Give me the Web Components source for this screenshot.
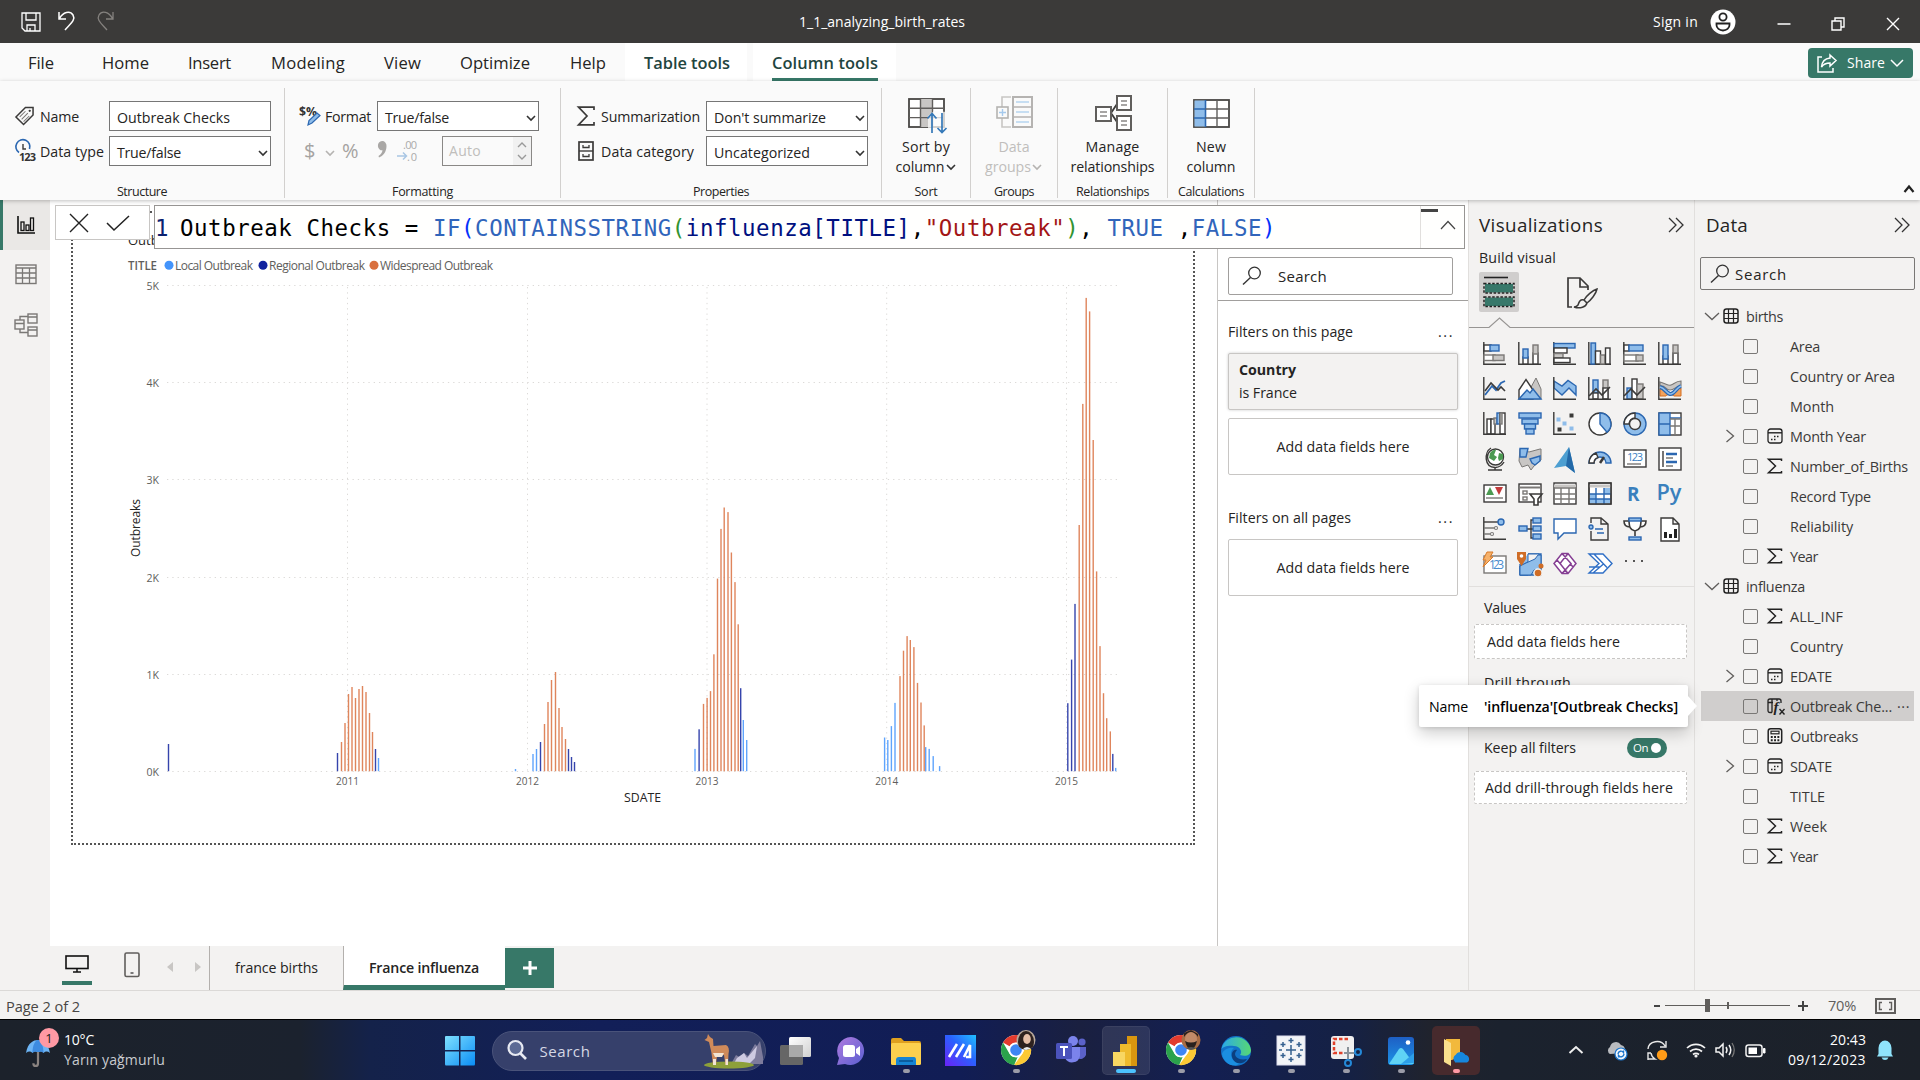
<!DOCTYPE html>
<html lang="en">
<head>
<meta charset="utf-8">
<title>1_1_analyzing_birth_rates</title>
<style>
html,body{margin:0;padding:0;width:1920px;height:1080px;overflow:hidden;background:#f3f2f1;font-family:"Open Sans","Noto Sans",sans-serif;font-size:14.2px;color:#252423}
</style>
</head>
<body>
<bi-app></bi-app>
<script>
const define=(name,css,html,setup)=>customElements.define(name,class extends HTMLElement{
  constructor(){super();this.attachShadow({mode:'open'});}
  connectedCallback(){
    if(this.ready)return;this.ready=true;
    const body=typeof html==='function'?html(this):html;
    this.shadowRoot.innerHTML=`<style>*{box-sizing:border-box}svg{display:block}:host{box-sizing:border-box}${css}</style>${body}`;
    if(setup)setup(this);
  }
});

/* text fitted to a given width by letter spacing */
define('fit-text',`:host{display:inline-block;white-space:nowrap;flex:none}span{display:inline-block;white-space:pre}`,
  `<span><slot></slot></span>`,el=>{
    const w=parseFloat(el.getAttribute('w'));
    el.style.width=w+'px';
    const fit=()=>{const s=el.shadowRoot.querySelector('span');s.style.letterSpacing='0px';
      const n=el.textContent.length,nat=s.getBoundingClientRect().width;
      if(nat&&n)s.style.letterSpacing=((w-nat)/n).toFixed(3)+'px';};
    queueMicrotask(fit);window.addEventListener('load',fit);
  });
const T=(w,t,st='')=>`<fit-text w="${w}" style="${st}">${t}</fit-text>`;

const D='#3b3a39',B='#2b67b1',L='#8fbdea',G='#c8c6c4',GR='#7a7876';
const r=(x,y,w,h,f='#fff',s=D,sw=1.4)=>`<rect x="${x}" y="${y}" width="${w}" height="${h}" fill="${f}" stroke="${s}" stroke-width="${sw}"/>`;
const p=(d,s=D,f='none',sw=1.4)=>`<path d="${d}" stroke="${s}" fill="${f}" stroke-width="${sw}"/>`;
const c=(x,y,q,f='none',s='none',sw=1.4)=>`<circle cx="${x}" cy="${y}" r="${q}" fill="${f}" stroke="${s}" stroke-width="${sw}"/>`;
const ax=p('M.8 0V22.2H23');
const chev=(s='#333',w=1.6)=>`<path d="M2 4l4 4 4-4" stroke="${s}" fill="none" stroke-width="${w}"/>`;
const head=(id,face)=>`<clipPath id="${id}"><ellipse cx="26" cy="8" rx="9.5" ry="10"/></clipPath><g clip-path="url(#${id})">${face}</g>`;
const chrome=c(16,18,15,'#fff')+`<path d="M16 3a15 15 0 0 1 13 7.5H16a7.5 7.5 0 0 0-6.5 3.8L3 10.5A15 15 0 0 1 16 3z" fill="#e33b2e"/><path d="M3 10.5l6.5 11.2A7.5 7.5 0 0 0 17.6 25l-3.4 8A15 15 0 0 1 3 10.5z" fill="#2ba24c"/><path d="M29 10.5A15 15 0 0 1 14.200 33l8.300-11.500a7.500 7.500 0 0 0-1-11z" fill="#fcc934"/>`+c(16,18,7.3,'#fff')+c(16,18,5.8,'#3f86f4');

const ICONS={
 save:[20,20,p('M1 1H19V19H4L1 16ZM5 1V8H15V1M6 19V13H14V19M9 16v3','#fff','none',1.3)],
 undo:[18,20,p('M1 1V8H8M1.500 7.500C5 1 12-1 15 4C18 9 12 13 7 19','#fff','none',1.5)],
 redo:[18,20,p('M17 1V8H10M16.500 7.500C13 1 6-1 3 4C0 9 6 13 11 19','#85827f','none',1.3)],
 user:[26,26,c(13,13,12.5,'#fff')+c(13,8,3.6,'none','#222',1.8)+`<path d="M6.500 14.500h13v1.500a6.500 5.500 0 0 1-13 0z" fill="none" stroke="#222" stroke-width="1.800"/>`],
 min:[14,14,p('M.5 8H13.5','#fff','none',1.5)],
 restore:[14,14,p('M1 4H10V13H1ZM4 4V1H13V10H10','#fff','none',1.4)],
 close:[14,14,p('M1 1L13 13M13 1L1 13','#fff','none',1.4)],
 share:[20,20,p('M5 4H1V19H16V15','#fff','none',1.5)+p('M13 2L19 7.500L13 13V10C9 10 6.500 11 4.500 14C5 8.500 8 5.500 13 5Z','#fff','none',1.5)],
 chevW:[14,10,p('M1 2L7 8L13 2','#fff','none',1.5)],
 tag:[20,20,p('M1 11L11 1H19V9L9 19Z',D,'none',1.6)+c(15.5,4.500,1.2,D)+p('M5 11L11 5M7 13.500L13.500 7M9 16L15 10',GR,'none',1.1)],
 dtype:[22,22,p('M4 12.500A7 7 0 1 1 14.500 9',B,'none',1.6)+p('M8 4V9H11',D,'none',1.4)+`<text x="4" y="21" font-size="11" font-weight="700" fill="#333" font-family="Open Sans" textLength="17">123</text>`],
 fmt:[22,22,`<text x="0" y="11" font-size="13" font-weight="700" fill="#333" font-family="Open Sans" textLength="18" lengthAdjust="spacingAndGlyphs">$%</text>`+p('M9 20L10 15.500L18 8L21 10.500L13 18Z',B,L,1.2)],
 sigma:[18,20,p('M17 4V1.200H1.500L10 10L1.500 18.800H17V16',D,'none',1.7)],
 cabinet:[16,20,r(1,1,14,18,'none',D,1.7)+p('M1 10H15',D)+p('M5 4v2.500H11V4M5 13v2.500H11V13',D,'none',1.3)],
 comma:[10,17,`<path d="M5 0A4.300 4.600 0 0 1 9.500 5C9.500 11 6 15 2 16.500L1.500 15C4 13.500 5.300 11.500 5.500 9.300A4.300 4.600 0 0 1 5 0z" fill="#a9a7a5"/>`],
 decimals:[22,22,`<text x="6" y="9" font-size="11" fill="#aaa" font-family="Open Sans" textLength="14">.00</text><text x="10" y="21" font-size="11" fill="#aaa" font-family="Open Sans" textLength="10">.0</text>`+p('M0 16H9M6 12.500L9.500 16L6 19.500','#a9c6e4','none',1.5)],
 chevS:[12,12,chev()],
 chevG:[12,12,chev('#b5b3b1')],
 up:[10,8,p('M1 6L5 2L9 6','#999','none',1.4)],
 down:[10,8,p('M1 2L5 6L9 2','#999','none',1.4)],
 sort:[40,38,r(1,1,35,28,'#fff','#484644',1.8)+`<rect x="12.500" y="1" width="12" height="28" fill="#c8c6c4"/>`+p('M1 10.300H36M1 19.600H36M12.500 1V29M24.500 1V29','#605e5c','none',1.4)+`<path d="M20 18L26 13L39 14V38H20z" fill="#fafafa" opacity=".75"/>`+p('M24 35V16M19.500 20.500L24 15.500L28.500 20.500M34 15V34M29.500 30L34 34.500L38.500 30','#3478b8','none',1.7)],
 groups:[38,34,p('M15 1H6V31H15','#c8c6c4','none',1.6)+r(17,1,19,30,'#fafafa','#b5b3b1',2)+p('M17 11H36M17 21H36','#b5b3b1')+p('M20 6H33M20 16H33M20 26H33','#b7d5f0','none',1.5)+r(1,11,11,11,'#fafafa','#b5b3b1',1.6)+p('M3 16.500H10M6.500 13V20','#a5c9ec','none',1.4)],
 manage:[38,38,p('M16 18L22 9M16 18L22 27',D,'none',1.8)+r(1,12,15,14,'#fff','#605e5c',2)+r(22,1,14,14,'#fff','#605e5c',2)+r(22,21,14,14,'#fff','#605e5c',2)+p('M5 17H12M5 21H12M26 6H32M26 10H32M26 26H32M26 30H32','#8a8886','none',1.3)],
 newcol:[38,30,r(1,1,35,27,'#fff','#484644',1.8)+`<rect x="1.500" y="1.500" width="11" height="26" fill="#8fbdea"/>`+p('M12.500 1V28M1 10H12.500M1 19H12.500',B,'none',1.6)+p('M12.500 10H36M12.500 19H36M24 1V28','#605e5c')],
 rcoll:[12,10,p('M1.500 8L6 2.500L10.500 8','#222','none',2.2)],
 report:[18,18,p('M1 0V17H18','#111','none',1.6)+r(4,6,3,8.500,'none','#111',1.3)+r(9,9,3,5.500,'none','#111',1.3)+r(13.500,2,3,12.500,'none','#111',1.3)],
 table:[22,21,r(1,1,20,18.500,'none',GR,1.4)+p('M1 4H21M1 9H21M1 14H21M7.500 4V19M14.500 4V19',GR,'none',1.3)],
 model:[24,24,r(1,7,9,9,'none',GR)+r(14,1,9,9,'none',GR)+r(14,14,9,9,'none',GR)+p('M1 10.500H10M14 4H23M14 17H23M6 7V3.500H14M6 16V19.500H14',GR)],
 X:[20,20,p('M1 1L19 19M19 1L1 19','#222','none',1.4)],
 check:[24,18,p('M1 9L8 16L23 2','#222','none',1.5)],
 upL:[16,10,p('M1 9L8 1.500L15 9','#444','none',1.2)],
 search:[20,20,c(12.500,7,5.800,'none','#333',1.3)+p('M8.500 11.500L1 18.500','#333','none',1.4)],
 dbl:[16,16,p('M1 1L8 8L1 15M8 1L15 8L8 15','#333','none',1.3)],
 build:[32,32,p('M1 1.500H25','#222','none',1.6)+`<rect x="2" y="8" width="28" height="8.500" fill="#37786a"/><rect x="1" y="7.500" width="30" height="9.500" fill="none" stroke="#222" stroke-width="1.500" stroke-dasharray="2.500 1.600"/><rect x="2" y="21.500" width="28" height="8.500" fill="#37786a"/><rect x="1" y="21" width="30" height="9.500" fill="none" stroke="#222" stroke-width="1.500" stroke-dasharray="2.500 1.600"/>`],
 format:[32,32,p('M6 30H2V1H14L22 9V13M14 1V10H22M22 22V24',D,'none',1.7)+p('M31 12C27 13 20 19 18 23L21 26C25 23 30 17 31 12ZM18 23C14 22 13 25 12 28C11 29.500 10 30 8 30C14 32 20 30 21 26',D,'#f3f2f1',1.5)],
 expand:[10,14,p('M1.500 1L8.500 7L1.500 13','#605e5c','none',1.3)],
 collapse:[16,10,p('M1 2L8 8.500L15 2','#605e5c','none',1.3)],
 tbl:[16,16,`<rect x="1" y="1" width="14" height="14" rx="2.500" fill="none" stroke="#222" stroke-width="1.500"/>`+p('M5.500 1V15M10.500 1V15M1 5.500H15M1 10.500H15','#222','none',1.2)],
 cal:[16,16,`<rect x="1" y="1" width="14" height="14" rx="2.500" fill="none" stroke="#222" stroke-width="1.300"/>`+p('M1 4.800H15','#222','none',1.4)+`<path d="M7 8.500h5.500M4 11.500h5.500" stroke="#222" stroke-width="1.500" stroke-dasharray="1.500 1.500"/>`],
 sum:[16,16,p('M14.500 3V1.200H1.500L8.500 8L1.500 14.800H14.500V13','#222','none',1.5)],
 fx:[18,17,`<path d="M5 14.500H3Q1 14.500 1 12.500V3Q1 1 3 1H12Q14 1 14 3V5M1 4.500H6M5 1V14.500M10 1V3" stroke="#222" stroke-width="1.300" fill="none"/><text x="6.500" y="14" font-size="15" font-style="italic" font-weight="700" font-family="Liberation Serif" fill="#222">f</text>`+p('M12.500 11L17.500 16.500M17.500 11L12.500 16.500','#222','none',1.4)],
 calc:[16,16,`<rect x="1.200" y=".8" width="13.500" height="14.500" rx="2.500" fill="none" stroke="#222" stroke-width="1.500"/>`+r(4,3.200,8,2.600,'none','#222',1.2)+`<path d="M3.800 9h8.500M3.800 12.200h8.500" stroke="#222" stroke-width="1.900" stroke-dasharray="1.900 1.400"/>`],
 desktop:[24,18,r(1,1,22,12.500,'none','#111',1.6)+p('M12 13V16.500M8 17H16','#111','none',1.5)],
 phone:[16,26,`<rect x="1" y="1" width="14" height="23.500" rx="1.500" fill="none" stroke="#605e5c" stroke-width="1.600"/>`+p('M6.500 21H9.500','#444')],
 left:[6,10,`<path d="M6 0V10L0 5z" fill="#c8c6c4"/>`],
 right:[6,10,`<path d="M0 0V10L6 5z" fill="#c8c6c4"/>`],
 plus:[14,14,p('M7 0V14M0 7H14','#fff','none',3)],
 fitp:[21,16,r(1,1,19,14,'none','#605e5c',2)+p('M7 4.500H4.500V11.500H7M14 4.500H16.500V11.500H14','#605e5c','none',1.4)],

 v0:[24,24,ax+r(1,3,7,6,'#fff')+r(7,3,9,6,L,B)+r(1,13,11,5.500,'#fff',GR)+r(10,13,11,5.500,G,GR)],
 v1:[24,24,ax+r(5,15,5,7)+r(5,7,5,9,L,B)+r(15,11,5,11)+r(15,3,5,9,G,GR)],
 v2:[24,24,ax+r(1,1.500,21,4.500,L,B)+r(1,6,13,5)+r(1,11.500,9,4.500,G,GR)+r(1,16,16,4.500)],
 v3:[24,24,ax+r(3,1,4.500,21,L,B)+r(7.500,9,5,13)+r(12.500,13,4.500,9,G,GR)+r(17.500,6,4.500,16)],
 v4:[24,24,ax+r(1,3,5,6)+r(6,3,14,6,L,B)+r(1,13,14,6,'#fff',GR)+r(13,13,7,6,G,GR)],
 v5:[24,24,ax+r(5,14,5,8)+r(5,3,5,14,L,B)+r(15,11,5,11)+r(15,3,5,8,G,GR)],
 v6:[24,24,ax+p('M2 18L9 9L13 13L18 6L22 4',B,'none',1.8)+p('M2 14L8 6L15 13L18 10L22 14',D,'none',1.6)],
 v7:[24,24,`<path d="M12 12L18 1L23 12V22H12z" fill="${G}" stroke="${GR}"/>`+p('M1 13L8 2.500L15 13V22H1Z',D,'#fff')+p('M1 22L9 13L12 16L15 12L23 22Z',B,L)],
 v8:[24,24,p('M1 4L9 9L15 3.500L23 9V18L16 11L9 18L1 11Z',B,L)+ax],
 v9:[24,24,r(5,3,5,13,L,B)+r(15,3,5,19,G,GR)+r(5,16,5,6)+r(15,11,5,11)+p('M1 19L8 12L14 18L22 10',D,'none',1.6)+ax],
 v10:[24,24,r(4,11,5,11,L,B)+r(9,2,5,20)+r(14,7,6,15,G,GR)+p('M1 19L8 12L14 18L22 10',D,'none',1.6)+ax],
 v11:[24,24,p('M2 5C9 7 10 9 13 8S18 4 23 4V9C17 9 17 13 12 13S8 8 2 9Z',GR,G,1.1)+p('M2 12H6C9 13 11 16 14 16S19 11 23 11V19H16C14 17 9 17 8 19H2Z','#d46c1f','#f2a25c',1)+p('M2 10C7 11 8 16 12 17S18 11 23 9',B,'none',4)+p('M2 10C7 11 8 16 12 17S18 11 23 9',L,'none',1.600)+ax],
 v12:[24,24,r(4,7,4,15)+r(8,7,4,15,'#fff',D)+r(11,6,3,6,G,GR)+r(14,1,3,11,L,B)+r(17,1,5,21)+r(17,1,2,11,G,GR)+ax],
 v13:[24,24,r(1,1,22,5,L,B)+r(4,7,16,5,L,B)+r(6.500,12,11,5,L,B)+r(8,17,8,5,L,B)],
 v14:[24,24,ax+r(17,2,3,3,D,D,1)+r(4,6,3,3,L,L,1)+r(10,10,3,3,L,L,1)+r(5,16,3,3,D,D,1)+r(17,15,3,3,L,L,1)],
 v15:[24,24,c(12,12,11,'#fff',D)+p('M12 12V1A11 11 0 0 1 19 20.300Z',B,L)],
 v16:[24,24,c(12,12,11,L,B)+p('M1 12A11 11 0 0 1 12 1V6A6 6 0 0 0 6 12Z',D,'#fff')+c(12,12,5.500,'#f3f2f1',D)],
 v17:[24,24,r(1,1,22,22)+r(1,1,11,22,L,B)+p('M1 12H12M12 6H23',B)+p('M12 7H23M17 7V23M12 14H23',GR)],
 v18:[24,24,c(12.500,10,8,'#fff',D)+`<path d="M7 6q3-4 6-3l-2 5 3 2-3 4-5-3zM16 6l4 1v5l-4 2-1-3z" fill="#4c9a52"/>`+p('M8 1C1 5 1 20 12 20.500M12 20V23M5 23H19M12.500 20.500Q18 20 21 15',D)],
 v19:[24,24,`<path d="M2 2L11 5L22 2H23V13L16 19L13 23L10 18L4 20L1 14z" fill="${G}" stroke="${GR}"/>`+p('M2 1.500H10L8 10H2Z',B,L)+p('M12 12L22 9V14L17 18L14 16Z',B,L)],
 v20:[24,26,`<path d="M16 0L22 26L13 19L1 21z" fill="#4d9fd1"/><path d="M16 0L22 26L13 19z" fill="#2369a8"/>`],
 v21:[24,24,p('M1 16A11 11 0 0 1 23 16H18A6 6 0 0 0 6 16Z',B,L)+p('M1 16A11 11 0 0 1 8 6L10 10.500A6 6 0 0 0 6 16Z',D,'#fff')+p('M12 16L16 10',D,'none',2.500)],
 v22:[24,24,r(1,3,22,17,'#fff')+`<text x="4" y="14" font-size="11" fill="#3b7fc4" font-family="Open Sans" textLength="16">123</text>`+p('M4 17H18',GR)],
 v23:[24,24,r(1,1,22,22)+p('M5 4V20',D)+p('M8 7H19M8 15H19',B,'none',2.500)+p('M8 11H15M8 19H15',GR)],
 v24:[24,24,r(1,3,22,17)+`<path d="M3 13L7 5L11 13z" fill="#4c9a52"/><path d="M12 5H20L16 13z" fill="#c43b3b"/>`+p('M3 16H20',GR)],
 v25:[24,24,r(1,2,22,18)+p('M1 5.500H23',GR,'none',2)+r(5,9,4,3,'#fff',GR)+r(5,15,4,3,'#fff',GR)+p('M12 12H24L20 17V23H16V17Z',D,'#fff',1.6)],
 v26:[24,24,r(1,1,22,21)+p('M1 4H23',G,'none',3)+p('M1 6H23M1 12H23M1 17H23M8 6V22M16 6V22',GR)],
 v27:[24,24,r(1,1,22,21)+`<path d="M1.700 12H8V21.500H1.700zM16 6H22.500V12H16zM8 17H22V21.500H8z" fill="${L}"/>`+p('M1 12H23M1 17H23M8 6V22M16 6V22',B)+p('M1 4H23',G,'none',3)+r(1,1,22,21,'none')],
 v28:[24,24,`<text x="4" y="19" font-size="20" font-weight="700" fill="#3a80bd" font-family="Open Sans" textLength="12.500" lengthAdjust="spacingAndGlyphs">R</text>`],
 v29:[24,24,`<text x="-1.500" y="18" font-size="22" font-weight="600" fill="#3a80bd" font-family="Open Sans" textLength="25" lengthAdjust="spacingAndGlyphs">Py</text>`],
 v30:[24,24,ax+p('M1 5H16',D)+c(18,5,3,L,B)+p('M1 11H12M1 17H8',GR)+c(13,11,1.500,'#fff',GR,1.1)+c(9,17,1.500,'#fff',GR,1.1)],
 v31:[24,24,p('M8 12H13M17 3H13V21H17M13 12H17',D)+r(1,9,8,5,L,B)+r(15,1,8,5,L,B)+r(15,9,8,5,L,B)+r(15,17,8,5,L,B)],
 v32:[24,24,p('M1 2H23V16H11L5 22V16H1Z',B,'#fff')],
 v33:[24,24,p('M3 6V1H13L20 7V23H3V14M13 1V7H20',D)+c(3,10,2,L,B)+p('M7 12H15M9 16H16',B)],
 v34:[24,24,p('M6 2C6 10 7 13 12 14C17 13 18 10 18 2ZM6 4H1C1 8 3 10 7 10M18 4H23C23 8 21 10 17 10M12 14V19',D,'#fff',1.6)+r(6,1,12,3,L,B)+r(6,20,12,3,L,B)],
 v35:[24,26,p('M3 1H15L21 7V24H3ZM15 1V7H21',D,'#fff')+`<path d="M6 15h3v6H6zM11 17h3v4h-3zM16 12h3v9h-3z" fill="#222"/>`],
 v36:[24,24,r(1,4,22,17,'#fff',GR)+`<text x="6" y="17" font-size="12" fill="#4a8cce" font-family="Open Sans" textLength="15">123</text>`+`<path d="M4 0H10L7 5H10L0 15L3 8H0z" fill="#f6b26b" stroke="#d97b29"/>`],
 v37:[24,26,p('M10 2H23V23H2V12',B,L)+p('M10 23C10 14 18 18 15 10C17 6 21 10 21 2V2H10V10L2 14V23Z',B,'#f3f2f1',1)+p('M2 14L8 11L17 7L20 3H23V17L16 18L13 23H2Z',B,L,1)+`<path d="M-1 0H8V7L3.500 14L-1 7z" fill="#cf6d27"/>`+c(3.500,4,1.800,'#fff')+c(20,21,4,'#cf6d27','#f3f2f1')+c(23,14,2.500,'#cf6d27')],
 v38:[24,24,p('M9 1.500H15L23 11.500L15 21.500H9L1 11.500ZM9 1.500L18 11.500L9 21.500M15 1.500L7 11.500L15 21.500M7 11.500L4 8M17 11.500L20 15','#853e93','#fff',1.5)],
 v39:[26,24,p('M1 2H15L24 11.500L15 21H1L11 11.500ZM6 2L19 15.500M1 15H12L5 21M12 15L16 11.500','#2f6fc6','#fff',1.4)],
 v40:[24,24,c(3,9,1,'#222')+c(11,9,1,'#222')+c(19,9,1,'#222')],

 umbrella:[26,32,`<path d="M0 16C2 5 8 2 13 2S24 5 26 16Q22 13 19 16Q16 13 13 16Q10 13 7 16Q4 13 0 16z" fill="#6db5f5"/><path d="M7 16C7 8 10 2 13 2S19 8 19 16Q16 13 13 16Q10 13 7 16z" fill="#3d8be0"/>`+p('M13 15V27Q13 30 10.500 30T8 27','#8a8380','none',2.400)],
 win:[30,30,`<defs><linearGradient id="w" x1="0" y1="0" x2="1" y2="1"><stop offset="0" stop-color="#7fe0ff"/><stop offset="1" stop-color="#0a8df5"/></linearGradient></defs><path d="M0 1Q0 0 1 0H14V14H0zM15.500 0H29Q30 0 30 1V14H15.500zM0 15.500H14V29.500H1Q0 29.500 0 28zM15.500 15.500H30V28Q30 29.500 29 29.500H15.500z" fill="url(#w)"/>`],
 loupe:[20,20,c(8.500,8,7,'#5c6a94','#e8eaf2',2.200)+p('M13.500 13.500L19 19','#e8eaf2','none',2.600)],
 llama:[60,36,`<path d="M28 31L33 22L38 25L41 20L45 23L52 11L54 13L57 8L60 24V31z" fill="#7d7b9c"/><path d="M34 25L41 20L44 25L54 13L52 25L45 32H30z" fill="#cfcbe2"/><ellipse cx="26" cy="32" rx="25" ry="3.500" fill="#8da03a"/><path d="M4 5L5 1L7 4L10 6L10.500 13L23 12Q27 14 25.500 21L25 32H22.500L21 22L14 23L13 32H10L8.500 20L6 9L1.500 7z" fill="#cf8a5a"/><path d="M10 20L21 20L19 24H12zM22.500 26h2.500v6h-2.500zM10 26h3v6h-3z" fill="#f2e4d4"/>`],
 taskview:[32,32,`<defs><linearGradient id="tv" x1="0" x2="1" y2="1"><stop offset="0" stop-color="#fff"/><stop offset="1" stop-color="#d0d0d0"/></linearGradient></defs><rect x="9" y="2" width="22" height="20" rx="1.500" fill="url(#tv)"/><rect x="0" y="10" width="23" height="20" rx="1.500" fill="#666"/><path d="M9 10H23V22H9z" fill="#a9a9a9"/>`],
 chat:[32,32,`<defs><linearGradient id="ch" x1="0" x2="1" y2="1"><stop offset="0" stop-color="#b07be0"/><stop offset="1" stop-color="#5a5fd0"/></linearGradient></defs><path d="M16 2A14 14 0 1 1 10 29L2 30L4 23A14 14 0 0 1 16 2z" fill="url(#ch)"/><rect x="8" y="10" width="12" height="12" rx="2.500" fill="#fff"/><path d="M21 14L25 11V21L21 18z" fill="#fff"/>`],
 explorer:[32,32,`<path d="M1 5Q1 3 3 3H11L14 6H29Q31 6 31 8V28H1z" fill="#dfa01f"/><rect x="1" y="8" width="30" height="22" rx="1.500" fill="#fcd04e"/><path d="M6 30V25Q6 22 9 22H24Q26 22 26 25V30z" fill="#1684d4"/><path d="M9 26H23" stroke="#0b5da0" stroke-width="2"/>`],
 myasus:[32,32,`<defs><linearGradient id="ma" x1="0" x2="1" y1="1" y2="0"><stop offset="0" stop-color="#6a22f5"/><stop offset=".55" stop-color="#2a62ff"/><stop offset="1" stop-color="#1fc0ff"/></linearGradient></defs><rect width="31" height="31" fill="url(#ma)"/><path d="M4 22L12 9M11 22L19 9M19 22L25 10V22H21" stroke="#fff" stroke-width="2.600" fill="none"/>`],
 chromeA:[36,34,chrome+head('ha',`<rect x="16" y="-2" width="20" height="20" fill="#b9a99b"/><ellipse cx="26" cy="10" rx="8" ry="11" fill="#2e2220"/><ellipse cx="27" cy="7" rx="3.800" ry="5" fill="#e6c0aa"/><path d="M22 18Q27 12 32 18" fill="#eee"/>`)],
 chromeB:[36,34,chrome+head('hb',`<rect x="16" y="-2" width="20" height="20" fill="#a86c45"/><ellipse cx="26" cy="7" rx="6" ry="7" fill="#c28a68"/><path d="M19 5Q26-5 33 5V2L26-2L19 1zM20 9Q26 12 32 9Q30 17 26 17T20 9z" fill="#2a211e"/><path d="M18 18Q26 12 34 18" fill="#555"/>`)],
 teams:[32,32,c(27,7,3.600,'#5b62c9')+c(18,6,5,'#7b83eb')+`<path d="M22 12H31V20A6 6 0 0 1 22 23z" fill="#5b62c9"/><path d="M10 12H25V21A8 8 0 0 1 10 23z" fill="#7b83eb"/><rect x="1" y="8" width="16" height="16" rx="1.500" fill="#4b53bc"/>`+p('M5 12H13M9 12V21','#fff','none',2)],
 powerbi:[26,32,`<rect x="14" y="1" width="10" height="30" fill="#d9960f"/><rect x="7" y="9" width="11" height="22" fill="#eebb2d"/><rect x="0" y="17" width="12" height="14" fill="#f8d762"/>`],
 edge:[32,32,`<defs><linearGradient id="e1" x1="0" x2="1"><stop offset="0" stop-color="#2aa9e8"/><stop offset="1" stop-color="#57d873"/></linearGradient></defs>`+c(16,16,15,'#1272c8')+`<path d="M1.500 14A15 15 0 0 1 31 15C31 20 26 22 20 20C23 17 20 11 14 11C8 10 3 12 1.500 14z" fill="url(#e1)"/><path d="M14 13C9 16 10 27 20 28C15 33 4 30 2 19C3 15 9 12 14 13z" fill="#1b8ee0"/><path d="M17 15C12 20 17 26 27 24C24 30 14 30 12 22C11 17 14 14 17 15z" fill="#0c3f7e"/>`],
 tableau:[30,32,r(1,1,28,29,'#f2f4f7','#dde',1)+p('M15 10V20M10 15H20M15 3V8M12.500 5.500H17.500M15 22V27M12.500 24.500H17.500M7 7V12M4.500 9.500H9.500M23 7V12M20.500 9.500H25.500M7 18V23M4.500 20.500H9.500M23 18V23M20.500 20.500H25.500M3 15H6M24 15H27','#35608f','none',1.500)],
 snip:[32,32,`<rect x="1" y="1" width="23" height="23" rx="3" fill="#f0f0f0"/><path d="M18 4H4V18H14" fill="none" stroke="#e0402a" stroke-width="2.500" stroke-dasharray="3.500 2"/>`+p('M14 18H26M18 12V26','#8a9299','none',2)+c(28,17,3,'none','#2489d8',2)+c(18,28,3,'none','#2489d8',2)],
 photos:[28,30,`<defs><linearGradient id="ph" x1="0" x2="0" y2="1"><stop offset="0" stop-color="#1e5fc4"/><stop offset="1" stop-color="#1c93e6"/></linearGradient></defs><rect x="1" y="1" width="26" height="28" rx="3" fill="url(#ph)"/><path d="M2 28L12 13Q14 11 16 13L27 28z" fill="#5fd3f5"/><path d="M14 28L27 17V27z" fill="#2d9fe8"/>`+c(21,6.500,2.300,'#fff')],
 onedrive:[28,30,`<path d="M4 3H18V20L10 24H4z" fill="#f2b93c"/><path d="M2 3L9 7V30L2 26z" fill="#fadf8d"/><path d="M13 26A4.500 4.500 0 0 1 14 18.500A5.500 5.500 0 0 1 23.500 19A4 4 0 0 1 25 26.500H13z" fill="#1687dd"/>`],
 trayup:[16,10,p('M1.500 8L8 2L14.500 8','#eee','none',2)],
 cloud:[22,20,`<path d="M4 13A4 4 0 0 1 4 6A6 6 0 0 1 15 4A5 5 0 0 1 18 12z" fill="#b9bbbf"/>`+c(15,13,6,'#f3f8fd','#1a74cc',1.2)+p('M12 13A3 3 0 0 1 17.500 11.500V9.500M18 13A3 3 0 0 1 12.500 14.500V16.500','#1a74cc','none',1.4)],
 sync:[22,22,p('M2 9A9 8 0 0 1 19 6M20 1V7H14M5 13A8 8 0 0 0 9 19H2M2 20V13H5','#e8e8e8','none',1.400)+c(16,15,5.200,'#ff9b17')],
 wifi:[20,16,p('M1 6A13 13 0 0 1 19 6M4 9.500A9 9 0 0 1 16 9.500M7 12.500A5 5 0 0 1 13 12.500','#f2f2f2','none',1.700)+c(10,14,1.600,'#f2f2f2')],
 volume:[20,16,p('M1 6H4L8 2V14L4 10H1ZM11 5Q13 8 11 11M14 3Q17.500 8 14 13','#f2f2f2','none',1.500)+p('M17 1Q21.500 8 17 15','#777','none',1.300)],
 battery:[22,14,`<rect x="1" y="1" width="16" height="11.500" rx="2.500" fill="none" stroke="#f2f2f2" stroke-width="1.500"/><rect x="3.500" y="3.500" width="8.500" height="6.500" fill="#fff"/><path d="M18.500 4.500H20V9H18.500z" fill="#fff" stroke="#fff"/>`],
 bell:[18,20,`<path d="M2.500 14V8A6.500 7.500 0 0 1 15.500 8V14L17 16.500H1z" fill="#8fe3fb"/><path d="M5.500 17.500H12.500Q11.500 20 9 20T5.500 17.500z" fill="#8fe3fb"/>`],
};
define('ui-icon',':host{display:inline-block;flex:none}svg{overflow:visible;width:100%;height:100%}',el=>{
  const [w,h,b]=ICONS[el.getAttribute('name')];
  if(!el.style.width)el.style.width=w+'px';el.style.height=h+'px';
  return `<svg viewBox="0 0 ${w} ${h}">${b}</svg>`;});
const I=(n,st='')=>`<ui-icon name="${n}" style="${st}"></ui-icon>`;

define('title-bar',`:host{display:flex;height:43px;background:#3b3a39;color:#fff;align-items:center;font-size:14px;padding-bottom:6px}`,
 `${I('save','margin:6px 0 0 21px')}${I('undo','margin:4px 0 0 17px')}${I('redo','margin:4px 0 0 20px')}
 ${T(166,'1_1_analyzing_birth_rates','margin:6px 0 0 685px;line-height:24px')}
 ${T(45,'Sign in','margin:6px 0 0 688px;line-height:24px')}${I('user','margin:6px 0 0 12px')}${I('min','margin:8px 0 0 41px')}${I('restore','margin:10px 0 0 40px')}${I('close','margin:10px 0 0 41px')}`);

define('ribbon-tabs',`:host{display:flex;height:38px;background:#fafafa;font-size:16.600px;line-height:39px;position:relative}
 .t{flex:none}.w{background:#fff;font-weight:600;color:#1f4540;flex:none;font-size:16.400px}
 .s{margin-left:auto;margin-right:7px;margin-top:5px;width:105px;height:30px;border-radius:4px;background:#377868;color:#fff;display:flex;align-items:center;font-size:14px;line-height:30px}`,
 `<div class="t">${T(26,'File','margin-left:28px')}${T(47,'Home','margin-left:48px')}${T(43,'Insert','margin-left:39px')}${T(74,'Modeling','margin-left:40px')}${T(37,'View','margin-left:39px')}${T(70,'Optimize','margin-left:39px')}${T(36,'Help','margin-left:40px')}</div>
 <div class="w" style="margin-left:19px;width:122px;padding-left:19px">${T(86,'Table tools')}</div>
 <div class="w" style="margin-left:6px;width:143px;padding-left:19px">${T(106,'Column tools','border-bottom:3px solid #377868;height:38px')}</div>
 <div class="s">${I('share','margin-left:9px')}${T(38,'Share','margin-left:10px')}${I('chevW','margin-left:5px')}</div>`);

define('ribbon-group',`:host{display:flex;flex-direction:column;flex:none;border-right:1px solid #d2d0ce;height:110px;margin-top:7px}
 .b{flex:1;padding-top:13px}.l{font-size:12.500px;line-height:16px;height:14px;text-align:center}`,
 el=>`<div class="b"><slot></slot></div><div class="l">${T(el.getAttribute('lw'),el.getAttribute('label'))}</div>`);
define('select-box',`:host{display:flex;flex:none;height:30px;width:162px;border:1px solid #767676;background:#fff;align-items:center;padding:4px 1px 0 7px}ui-icon{margin-left:auto}`,
 el=>`<slot></slot>${el.hasAttribute('plain')?'':I('chevS')}`);
define('ribbon-bar',`:host{display:flex;height:119px;background:#fafafa;position:relative;z-index:3;box-shadow:0 1px 4px rgba(0,0,0,.25);font-size:14.200px}
 .r{display:flex;height:30px;align-items:center;margin-bottom:5px;line-height:24px}
 .big{display:flex;flex-direction:column;align-items:center;line-height:20px;text-align:center}
 .ic{height:43px;display:flex;align-items:flex-start;margin-top:-7px}
 .sp{width:90px;height:30px;border:1px solid #8a8886;display:flex;align-items:center;color:#c0bebc;padding-left:6px;background:#fafafa}
 .ar{margin-left:auto;width:18px;height:100%;background:#f1f1f1;display:flex;flex-direction:column;justify-content:space-around;align-items:center;padding:2px 0}`,
 `<ribbon-group label="Structure" lw="50" style="width:285px">
   <div class="r">${I('tag','margin-left:15px;width:19px')}${T(39,'Name','margin-left:6px;padding-top:1px')}<select-box plain style="margin-left:30px">${T(113,'Outbreak Checks')}</select-box></div>
   <div class="r">${I('dtype','margin-left:15px')}${T(64,'Data type','margin-left:3px;padding-top:1px')}<select-box style="margin-left:5px">${T(64,'True/false')}</select-box></div>
  </ribbon-group>
  <ribbon-group label="Formatting" lw="61" style="width:276px">
   <div class="r">${I('fmt','margin-left:14px')}${T(46,'Format','margin-left:4px;padding-top:1px')}<select-box style="margin-left:6px">${T(64,'True/false')}</select-box></div>
   <div class="r" style="color:#a5a3a1;font-size:20px">${T(11,'$','margin-left:19px')}${I('chevG','margin:4px 0 0 9px')}${T(19,'%','margin-left:6px')}${I('comma','margin:-3px 0 0 16px')}${I('decimals','margin-left:10px')}<div class="sp" style="margin-left:23px;font-size:14px">${T(32,'Auto')}<div class="ar">${I('up')}${I('down')}</div></div></div>
  </ribbon-group>
  <ribbon-group label="Properties" lw="56" style="width:321px">
   <div class="r">${I('sigma','margin-left:16px')}${T(99,'Summarization','margin-left:6px;padding-top:1px')}<select-box style="margin-left:6px">${T(112,"Don't summarize")}</select-box></div>
   <div class="r">${I('cabinet','margin-left:17px')}${T(93,'Data category','margin-left:7px;padding-top:1px')}<select-box style="margin-left:12px">${T(96,'Uncategorized')}</select-box></div>
  </ribbon-group>
  <ribbon-group label="Sort" lw="23" style="width:89px"><div class="big"><div class="ic" style="padding:4px 0 0 3px">${I('sort')}</div>${T(48,'Sort by')}<div>${T(49,'column')}${I('chevS','margin-left:0;vertical-align:-1px')}</div></div></ribbon-group>
  <ribbon-group label="Groups" lw="40" style="width:87px"><div class="big" style="color:#c0bebc"><div class="ic" style="padding:2px 0 0 1px">${I('groups')}</div>${T(31,'Data')}<div>${T(46,'groups')}${I('chevG','margin-left:0;vertical-align:-1px')}</div></div></ribbon-group>
  <ribbon-group label="Relationships" lw="73" style="width:110px"><div class="big"><div class="ic" style="padding:1px 0 0 2px">${I('manage')}</div>${T(54,'Manage')}${T(84,'relationships')}</div></ribbon-group>
  <ribbon-group label="Calculations" lw="66" style="width:87px"><div class="big"><div class="ic" style="padding:5px 0 0 1px">${I('newcol')}</div>${T(30,'New')}${T(49,'column')}</div></ribbon-group>
  ${I('rcoll','margin:103px 5px 0 auto')}`);

define('side-rail',`:host{display:flex;flex-direction:column;width:50px;flex:none;background:#f3f2f1}
 div{height:50px;width:50px;display:flex;justify-content:center;align-items:center;border-left:3px solid transparent;padding-right:2px}
 .a{border-color:#377868;background:#eae8e6}`,
 `<div class="a">${I('report')}</div><div style="height:48px">${I('table')}</div><div style="height:54px">${I('model')}</div>`);

const bars=[];
const C={L:'#4394fb',R:'#12239e',W:'#d9703f'};
const add=(x,y,k)=>bars.push([x,y,k]);
const g=s=>s.split(';').forEach(t=>{const [x,y,k]=t.split(',');add(640+x/2.8,280+y/2.8,k||'W');});
g('154,1313,L;165.500,1258,R;178,1187;188,1170;197.500,1151;207,1048;217,836;227,697;236,637;246.500,650;256,763;266,846;275,964;282,1143,R;289.500,1232,L;299,1288,L');
g('685,1281,L;694,1288,L;704,1249,L;714,1184,L;728,1109;738,1038;748,997;757,1008;767,1028;777,1128;787,1183;796,1247;800,1308,L;810,1313,L;821,1333,L;839,1361,L');
g('1198,1185,R;1208.500,1063,R;1218,907,R;1230,686;1240,347;1249.500,50;1259,88;1269,448;1278.500,816;1288,1025;1298,1157;1307,1227;1317,1264;1324,1327,R;1332,1366,L');
add(168.5,744,'R');
[[337.5,753,'R'],[341.5,742],[345,723],[348.500,694],[352,687],[355.500,698],[359,689],[362.500,686],[366,692],[369.500,713],[372.500,732],[375.500,749,'R'],[378.500,758,'L']].forEach(a=>add(a[0],a[1],a[2]||'W'));
[[515.500,769,'L'],[533,754,'L'],[536.500,749,'L'],[540.500,742,'R'],[544.500,724],[548,702],[551.500,680],[555.500,672],[559,708],[562,727],[565.500,739,'W'],[568.500,749,'R'],[571.500,757,'R'],[574.500,762,'R']].forEach(a=>add(a[0],a[1],a[2]||'W'));

define('report-canvas',`:host{display:block;flex:1;background:#fff;padding:11px 0 0 21px;overflow:hidden}
 .pg{width:1124px;height:634px;border:2px dotted #555}svg{font-family:"Open Sans"}`,
 ()=>{
  const ys=[285.500,382.500,479.500,577.500,674.500,771.500],xs=[347.500,527.500,707,886.700,1066.500];
  let s='';
  ys.forEach((y,i)=>{s+=`<path d="M167 ${y}H1118" stroke="#dcdad8" stroke-dasharray="1.300 4"/><text x="159" y="${y+4}" text-anchor="end" textLength="12.500" lengthAdjust="spacingAndGlyphs" font-size="11.500" fill="#605e5c">${5-i}K</text>`;});
  xs.forEach((x,i)=>{s+=`<path d="M${x} 287V771" stroke="#dcdad8" stroke-dasharray="1.300 4"/><text x="${x}" y="785" text-anchor="middle" textLength="23" lengthAdjust="spacingAndGlyphs" font-size="11.500" fill="#605e5c">${2011+i}</text>`;});
  bars.forEach(([x,y,k])=>{s+=`<rect x="${(x-.75).toFixed(1)}" y="${y.toFixed(1)}" width="1.400" height="${(771.200-y).toFixed(1)}" fill="${C[k]}" opacity=".85"/>`;});
  const lg=(x,cl,tx,w)=>`<circle cx="${x}" cy="265.300" r="4.500" fill="${cl}"/><text x="${x+6}" y="270" textLength="${w}" font-size="12" fill="#605e5c">${tx}</text>`;
  s+=`<text x="128" y="270" textLength="29" lengthAdjust="spacingAndGlyphs" font-size="12" font-weight="600" fill="#605e5c">TITLE</text>`+lg(169,C.L,'Local Outbreak',78)+lg(263,C.R,'Regional Outbreak',96)+lg(374,C.W,'Widespread Outbreak',113);
  s+=`<text x="128" y="245" font-size="13" fill="#252423">Outb</text>`;
  s+=`<text transform="translate(139.500 528) rotate(-90)" text-anchor="middle" textLength="58" font-size="12" fill="#252423">Outbreaks</text><text x="642.500" y="801.500" text-anchor="middle" textLength="37" lengthAdjust="spacingAndGlyphs" font-size="12" fill="#252423">SDATE</text>`;
  return `<div class="pg"><svg width="1120" height="630" viewBox="73 213 1120 630">${s}</svg></div>`;});

define('formula-bar',`:host{display:flex;position:absolute;left:55px;top:5px;z-index:2}
 .a{width:95px;height:35px;border:1px solid #c8c6c4;background:#fff;display:flex;align-items:center;padding-left:13px}
 .f{margin-left:4px;width:1311px;height:44px;border:1px solid #979593;background:#fffffe;display:flex}
 pre{margin:0;font:22.400px/45px "DejaVu Sans Mono",monospace;color:#000;width:1265px;height:42px}
 .e{flex:1;border-left:1px solid #e1dfdd;display:flex;align-items:flex-start}
 .e i{width:17px;height:2.500px;background:#444;margin:3px 2px 0 0}b{font-weight:400;color:#3165bb}u{text-decoration:none;color:#0431fa}q{quotes:none;color:#319331}em{font-style:normal;color:#001080}s{text-decoration:none;color:#a31515}`,
 `<div class="a">${I('X')}${I('check','margin-left:17px')}</div>
 <div class="f"><pre><fit-text w="25" style="color:#0b216f">1 </fit-text><fit-text w="1096">Outbreak Checks = <b>IF</b><u>(</u><b>CONTAINSSTRING</b><q>(</q><em>influenza[TITLE]</em>,<s>"Outbreak"</s><q>)</q>, <b>TRUE</b> ,<b>FALSE</b><u>)</u></fit-text></pre>
 <div class="e"><i></i>${I('upL','margin-top:14px')}</div></div>`);

define('filter-pane',`:host{display:block;width:251px;flex:none;background:#fff;border-left:1px solid #c8c6c4;padding:57px 0 0 10px;font-size:14.200px}
 .s{width:225px;height:38px;border:1px solid #a19f9d;border-radius:2px;display:flex;align-items:center;padding-left:13px;font-size:15px}
 .ln{border-top:1px solid #a19f9d;margin:5px 0 0 -10px}
 .h{display:flex;justify-content:space-between;width:226px;line-height:24px}
 .c{width:230px;height:57px;border:1px solid #c8c6c4;border-radius:2px}.e{line-height:55px;text-align:center}
 .k{background:#f3f2f1;box-shadow:0 0 3px rgba(0,0,0,.2);padding:5px 10px;line-height:22.500px}`,
 `<div class="s">${I('search')}${T(49,'Search','margin-left:16px')}</div><div class="ln"></div>
 <div class="h" style="margin-top:19px">${T(125,'Filters on this page')}${T(16,'...','')}</div>
 <div class="c k" style="margin-top:9px"><div>${T(57,'Country','font-weight:700')}</div><div>${T(58,'is France')}</div></div>
 <div class="c e" style="margin-top:8px">${T(133,'Add data fields here')}</div>
 <div class="h" style="margin-top:31px">${T(123,'Filters on all pages')}${T(16,'...','')}</div>
 <div class="c e" style="margin-top:9px">${T(133,'Add data fields here')}</div>`);

define('toggle-switch',`:host{display:flex;width:40px;height:20px;border-radius:10px;background:#377868;color:#fff;font-size:11.500px;align-items:center;padding-left:6px}i{width:10px;height:10px;border-radius:5px;background:#fff;margin-left:3px}`,`${T(15,'On')}<i></i>`);
define('viz-pane',`:host{display:block;width:226px;flex:none;background:#f3f2f1;border-left:1px solid #e1dfdd;font-size:14.200px;position:relative}
 .h{display:flex;justify-content:space-between;padding:11px 10px 0 10px;font-size:18.800px;line-height:28px;font-weight:500;align-items:center}
 .bv{padding:7px 0 0 10px;line-height:24px;height:33px}
 .m{display:flex;padding-left:10px}.m div{width:40px;height:40px;background:#d0cecd;border-radius:2px;display:flex;align-items:center;justify-content:center}
 .g{display:grid;grid-template-columns:repeat(6,35px);grid-auto-rows:35px;padding:13px 0 0 14px}
 .d{border-top:1px solid #e1dfdd;margin-top:-1px;padding:9px 0 0 15px;line-height:24px}
 .b{width:213px;border:1px dashed #c8c6c4;background:#fff;border-radius:2px;margin-left:-10px;padding-left:12px}`,
 ()=>`<div class="h">${T(124,'Visualizations')}${I('dbl')}</div><div class="bv">${T(77,'Build visual')}</div>
 <div class="m"><div>${I('build')}</div>${I('format','margin:5px 0 0 47px')}</div>
 <svg width="225" height="12" style="margin-top:5px" viewBox="0 0 225 12"><path d="M0 10.500H20L30.500 1L41 10.500H226" fill="none" stroke="#979593" stroke-width="1.200"/></svg>
 <div class="g">${Array.from({length:41},(_,i)=>`<div>${I('v'+i)}</div>`).join('')}</div>
 <div class="d">${T(42,'Values')}<div class="b" style="height:35px;line-height:34px;margin-top:4px">${T(133,'Add data fields here')}</div>
 <div style="margin-top:12px">${T(87,'Drill through')}</div><div style="margin-top:41px;display:flex;align-items:center">${T(92,'Keep all filters')}<toggle-switch style="margin-left:51px"></toggle-switch></div>
 <div class="b" style="height:33px;line-height:31px;margin-top:11px;padding-left:10px">${T(188,'Add drill-through fields here')}</div></div>`);

define('field-tip',`:host{display:flex;position:absolute;left:1419px;top:485px;width:269px;height:42px;background:#fff;border-radius:2px;box-shadow:0 6px 16px rgba(0,0,0,.2),0 1px 4px rgba(0,0,0,.12);align-items:center;z-index:4;padding-left:10px;color:#000}
 svg{position:absolute;left:269px;top:11px}`,
 `${T(39,'Name')}${T(194,"'influenza'[Outbreak Checks]",'font-weight:600;margin-left:16px')}<svg width="10" height="20"><path d="M0 0L9 10L0 20z" fill="#fff"/></svg>`);

define('field-row',`:host{display:flex;height:30px;align-items:center;width:213px;margin-left:6px;color:#3b3a39}:host([sel]){background:#d0cecd}
 .x{width:42px;padding-left:24px;display:flex;flex:none}.c{width:15px;height:15px;border:1px solid #797775;border-radius:2px;flex:none}
 .i{width:32px;padding-left:9px;display:flex;flex:none}.tt{display:flex;align-items:center;padding-left:3px}`,
 el=>{const a=n=>el.getAttribute(n),lab=T(a('w'),a('label'));
 return el.hasAttribute('top')?`<div class="tt">${I('collapse')}${I('tbl','margin:0 7px 0 3px')}${lab}</div>`:
 `<div class="x">${el.hasAttribute('exp')?I('expand'):''}</div><div class="c"></div><div class="i">${a('icon')?I(a('icon')):''}</div>${lab}${el.hasAttribute('sel')?T(13,'···','margin-left:5px'):''}`;});
const F=(l,w,o='')=>`<field-row label="${l}" w="${w}" ${o}></field-row>`;
define('data-pane',`:host{display:block;flex:1;background:#f3f2f1;border-left:1px solid #e1dfdd;font-size:14.400px}
 .h{display:flex;justify-content:space-between;padding:11px 10px 0 11px;font-size:18.800px;line-height:28px;font-weight:500;align-items:center}
 .s{margin:18px 0 11px 5px;width:215px;height:33px;border:1px solid #797775;border-radius:2px;display:flex;align-items:center;padding-left:9px;font-size:15px}`,
 `<div class="h">${T(42,'Data')}${I('dbl')}</div><div class="s">${I('search')}${T(52,'Search','margin-left:5px;padding-top:1px')}</div>`+
 F('births',37,'top')+F('Area',30)+F('Country or Area',105)+F('Month',44)+F('Month Year',76,'exp icon="cal"')+F('Number_of_Births',118,'icon="sum"')+F('Record Type',81)+F('Reliability',63)+F('Year',28,'icon="sum"')+
 F('influenza',59,'top')+F('ALL_INF',53,'icon="sum"')+F('Country',53)+F('EDATE',42,'exp icon="cal"')+F('Outbreak Che...',102,'sel icon="fx"')+F('Outbreaks',68,'icon="calc"')+F('SDATE',42,'exp icon="cal"')+F('TITLE',35)+F('Week',37,'icon="sum"')+F('Year',28,'icon="sum"'));

define('page-tabs',`:host{display:flex;height:44px;background:#f3f2f1;font-size:14.200px;line-height:43px}
 .d{margin-left:12px;width:30px;height:39px;border-bottom:4px solid #377868;display:flex;justify-content:center;padding-top:9px}
 .t{border-left:1px solid #b3b0ad;height:44px}.a{background:#fff;border-bottom:5px solid #377868;width:162px;padding-left:25px;font-weight:600}
 .p{background:#377868;width:49px;height:40px;margin-top:2px;display:flex;align-items:center;justify-content:center}`,
 `<div class="d">${I('desktop')}</div>${I('phone','margin:6px 0 0 32px')}${I('left','margin:16px 0 0 27px')}${I('right','margin:16px 0 0 22px')}
 <div class="t" style="margin-left:8px;width:134px;padding-left:25px">${T(83,'france births')}</div><div class="t a">${T(110,'France influenza')}</div><div class="p">${I('plus')}</div>`);

define('status-bar',`:host{display:flex;height:29px;background:#f3f2f1;border-top:1px solid #dbd9d7;align-items:center;color:#484644;font-size:14.600px;padding-left:6px;line-height:24px}`,
 `${T(74,'Page 2 of 2','margin-top:1px')}<svg width="160" height="20" style="margin-left:1571px" viewBox="1651 995 160 20"><path d="M1654 1006H1660M1798 1006H1808M1803 1001V1011" stroke="#444" stroke-width="2"/><path d="M1665 1005.500H1790" stroke="#605e5c" stroke-width="1.200"/><path d="M1705 999h5v13h-5zM1727 1002h2v7h-2z" fill="#605e5c"/></svg>${T(28,'70%','margin-left:17px;color:#605e5c')}${I('fitp','margin:2px 0 0 19px')}`);

define('task-icon',`:host{display:flex;width:55px;height:60px;flex:none;flex-direction:column;align-items:center;padding-top:6px}
 .b{width:48px;height:49px;border-radius:5px;display:flex;align-items:center;justify-content:center}
 :host([hl]) .b{background:rgba(255,255,255,.1);box-shadow:inset 0 0 0 1px rgba(255,255,255,.06)}:host([warn]) .b{background:#472a2d}
 i{width:7px;height:4px;border-radius:2px;background:#9b9ca8;margin-top:-6px;z-index:1}:host([hl]) i{width:20px;background:#4cc2ff}:host([warn]) i{background:#ff99a4}`,
 el=>{const n=el.getAttribute('name');return `<div class="b">${I(n,/chrome/.test(n)?'margin:-3px 0 0 3px':'')}</div>${el.hasAttribute('off')?'':'<i></i>'}`;});
define('task-bar',`:host{display:flex;height:61px;border-top:1px solid #000;background:linear-gradient(90deg,#1c222b 0,#1b222e 300px,#14224a 370px,#121f58 600px,#111d55 960px,#1a2040 1080px,#131f52 1200px,#152144 1350px,#20232d 1430px,#1b222e 1500px,#1c2129 1920px);color:#fff;font-size:14px;line-height:20px;align-items:flex-start}
 .w{width:165px;margin-left:26px;display:flex;position:relative}.bd{position:absolute;left:13px;top:8px;width:20px;height:20px;border-radius:10px;background:#ff99a4;color:#222;text-align:center;font-size:13px}
 .s{margin:11px 0 0 17px;width:276px;height:40px;border-radius:20px;background:#36406b;border:1px solid #4a537a;display:flex;align-items:center;padding-left:14px;color:#d5d8e5;font-size:15px}
 .k{text-align:right;margin:10px 10px 0 0;width:100px}`,
 `<div class="w">${I('umbrella','margin-top:17px;width:24px')}<div class="bd">1</div><div style="margin:10px 0 0 14px">${T(30,'10°C')}<br>${T(101,'Yarın yağmurlu','color:#c9cbcf')}</div></div>
 ${I('win','margin:16px 0 0 256px')}<div class="s">${I('loupe','margin-top:-2px')}${T(51,'Search','margin-left:12px;margin-top:-1px')}${I('llama','margin:-1px 2px 0 auto')}</div>
 <div style="display:flex;margin-left:3px">${[['taskview','off'],['chat','off'],['explorer'],['myasus','off'],['chromeA'],['teams','off'],['powerbi','hl'],['chromeB'],['edge'],['tableau'],['snip'],['photos'],['onedrive','warn']].map(([n,a=''])=>`<task-icon name="${n}" ${a}></task-icon>`).join('')}</div>
 ${I('trayup','margin:25px 0 0 84px')}${I('cloud','margin:21px 0 0 22px')}${I('sync','margin:20px 0 0 18px')}${I('wifi','margin:22px 0 0 18px')}${I('volume','margin:22px 0 0 9px')}${I('battery','margin:24px 0 0 10px')}
 <div class="k" style="margin-left:auto">${T(36,'20:43')}<br>${T(78,'09/12/2023')}</div>${I('bell','margin:20px 26px 0 0')}`);

define('bi-app',`:host{display:flex;flex-direction:column;width:1920px;height:1080px}
 .main{display:flex;height:790px;position:relative}.c{display:flex;flex-direction:column;width:1418px;flex:none}.u{display:flex;height:746px}`,
 `<title-bar></title-bar><ribbon-tabs></ribbon-tabs><ribbon-bar></ribbon-bar>
 <div class="main"><side-rail></side-rail><div class="c"><div class="u"><report-canvas></report-canvas><filter-pane></filter-pane></div><page-tabs></page-tabs></div>
 <viz-pane></viz-pane><data-pane></data-pane><formula-bar></formula-bar><field-tip></field-tip></div>
 <status-bar></status-bar><task-bar></task-bar>`);
</script>
</body>
</html>
